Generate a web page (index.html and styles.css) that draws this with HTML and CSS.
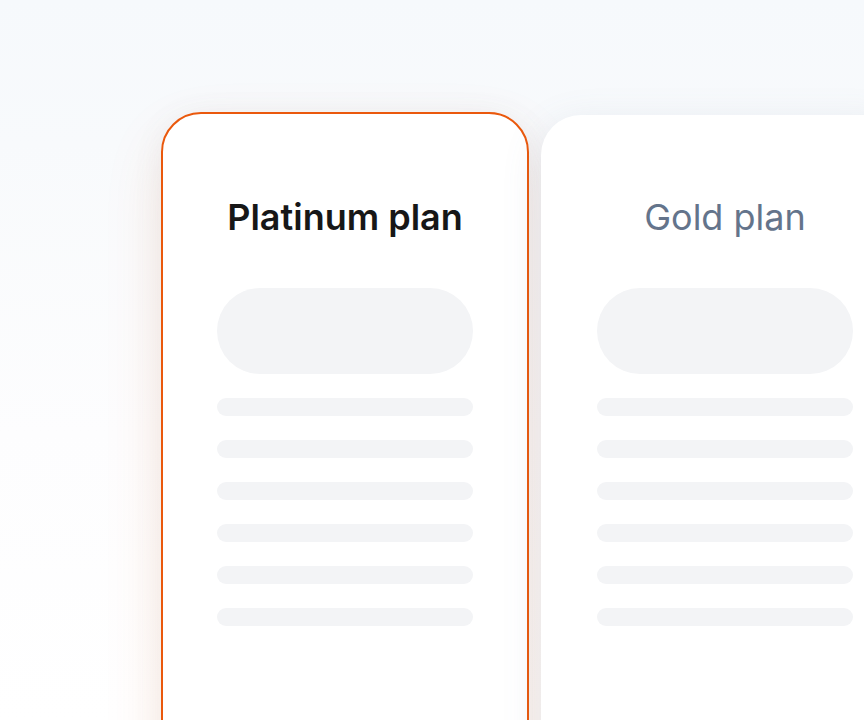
FILE: index.html
```html
<!DOCTYPE html>
<html lang="en">
<head>
<meta charset="utf-8">
<title>Plans</title>
<link rel="stylesheet" href="styles.css">
</head>
<body>
<main class="stage">
  <section class="card card-active">
    <h2 class="card-title">Platinum plan</h2>
    <div class="pill"></div>
    <div class="lines">
      <div class="line"></div>
      <div class="line"></div>
      <div class="line"></div>
      <div class="line"></div>
      <div class="line"></div>
      <div class="line"></div>
    </div>
  </section>
  <section class="card card-muted">
    <h2 class="card-title title-muted">Gold plan</h2>
    <div class="pill"></div>
    <div class="lines">
      <div class="line"></div>
      <div class="line"></div>
      <div class="line"></div>
      <div class="line"></div>
      <div class="line"></div>
      <div class="line"></div>
    </div>
  </section>
</main>
</body>
</html>
```
FILE: styles.css
```css
html, body {
  margin: 0;
  padding: 0;
  height: 100%;
  overflow: hidden;
}
body {
  background: linear-gradient(180deg, #f6f9fc 0%, #f8fafc 20%, #fdfdfe 60%, #ffffff 100%);
  font-family: Inter, "Noto Sans", sans-serif;
}
.stage {
  display: flex;
  align-items: flex-start;
  gap: 12px;
  height: 720px;
  overflow: hidden;
  box-sizing: border-box;
  padding: 112px 0 0 161px;
}
.card {
  flex: 0 0 auto;
  box-sizing: border-box;
  width: 368px;
  height: 700px;
  background: #ffffff;
  border-radius: 40px;
  padding: 83px 54px 0;
  display: flex;
  flex-direction: column;
}
.card-active {
  border: 2px solid #ea580c;
  box-shadow: 0 24px 60px rgba(234, 88, 12, 0.12), 0 4px 30px rgba(100, 116, 139, 0.08);
}
.card-muted {
  margin-top: 3px;
  padding-top: 80px;
  border: 2px solid transparent;
  box-shadow: 0 10px 40px rgba(100, 116, 139, 0.14);
}
.card-title {
  margin: 0;
  text-align: center;
  font-size: 36px;
  line-height: 40px;
  font-weight: 600;
  color: #171717;
}
.title-muted {
  font-weight: 400;
  color: #64748b;
}
.pill {
  margin-top: 51px;
  height: 86px;
  border-radius: 43px;
  background: #f3f4f6;
}
.lines {
  margin-top: 24px;
  display: flex;
  flex-direction: column;
  gap: 24px;
}
.line {
  height: 18px;
  border-radius: 9px;
  background: #f3f4f6;
}
```
